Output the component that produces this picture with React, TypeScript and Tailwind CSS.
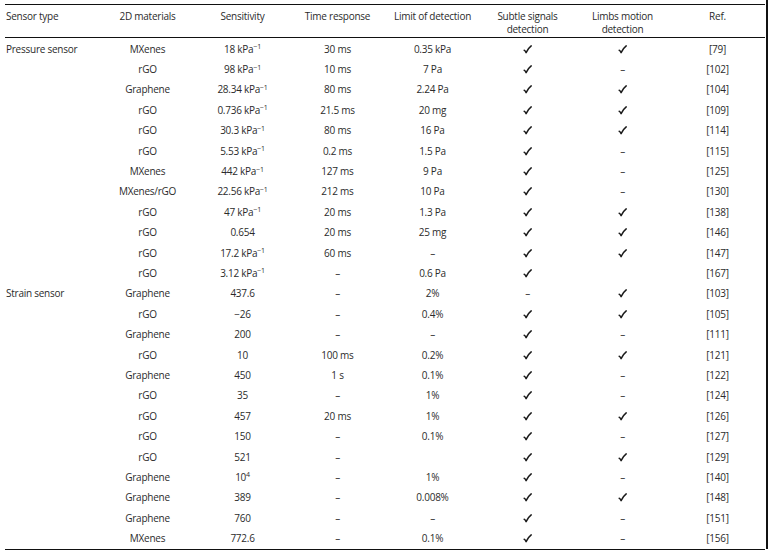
import React from "react";

type Row = {
  type?: string;
  mat: string;
  sens: React.ReactNode;
  time: string;
  limit: string;
  subtle: string;
  limbs: string;
  ref: string;
};

const kpa = (v: string) => (
  <>
    {v} kPa<sup className="text-[7px]">−1</sup>
  </>
);

const C = "✓";
const D = "–";

const rows: Row[] = [
  { type: "Pressure sensor", mat: "MXenes", sens: kpa("18"), time: "30 ms", limit: "0.35 kPa", subtle: C, limbs: C, ref: "[79]" },
  { mat: "rGO", sens: kpa("98"), time: "10 ms", limit: "7 Pa", subtle: C, limbs: D, ref: "[102]" },
  { mat: "Graphene", sens: kpa("28.34"), time: "80 ms", limit: "2.24 Pa", subtle: C, limbs: C, ref: "[104]" },
  { mat: "rGO", sens: kpa("0.736"), time: "21.5 ms", limit: "20 mg", subtle: C, limbs: C, ref: "[109]" },
  { mat: "rGO", sens: kpa("30.3"), time: "80 ms", limit: "16 Pa", subtle: C, limbs: C, ref: "[114]" },
  { mat: "rGO", sens: kpa("5.53"), time: "0.2 ms", limit: "1.5 Pa", subtle: C, limbs: D, ref: "[115]" },
  { mat: "MXenes", sens: kpa("442"), time: "127 ms", limit: "9 Pa", subtle: C, limbs: D, ref: "[125]" },
  { mat: "MXenes/rGO", sens: kpa("22.56"), time: "212 ms", limit: "10 Pa", subtle: C, limbs: D, ref: "[130]" },
  { mat: "rGO", sens: kpa("47"), time: "20 ms", limit: "1.3 Pa", subtle: C, limbs: C, ref: "[138]" },
  { mat: "rGO", sens: "0.654", time: "20 ms", limit: "25 mg", subtle: C, limbs: C, ref: "[146]" },
  { mat: "rGO", sens: kpa("17.2"), time: "60 ms", limit: D, subtle: C, limbs: C, ref: "[147]" },
  { mat: "rGO", sens: kpa("3.12"), time: D, limit: "0.6 Pa", subtle: C, limbs: "", ref: "[167]" },
  { type: "Strain sensor", mat: "Graphene", sens: "437.6", time: D, limit: "2%", subtle: D, limbs: C, ref: "[103]" },
  { mat: "rGO", sens: "−26", time: D, limit: "0.4%", subtle: C, limbs: C, ref: "[105]" },
  { mat: "Graphene", sens: "200", time: D, limit: D, subtle: C, limbs: D, ref: "[111]" },
  { mat: "rGO", sens: "10", time: "100 ms", limit: "0.2%", subtle: C, limbs: C, ref: "[121]" },
  { mat: "Graphene", sens: "450", time: "1 s", limit: "0.1%", subtle: C, limbs: D, ref: "[122]" },
  { mat: "rGO", sens: "35", time: D, limit: "1%", subtle: C, limbs: D, ref: "[124]" },
  { mat: "rGO", sens: "457", time: "20 ms", limit: "1%", subtle: C, limbs: C, ref: "[126]" },
  { mat: "rGO", sens: "150", time: D, limit: "0.1%", subtle: C, limbs: D, ref: "[127]" },
  { mat: "rGO", sens: "521", time: D, limit: "", subtle: C, limbs: C, ref: "[129]" },
  {
    mat: "Graphene",
    sens: (
      <>
        10<sup className="text-[7px]">4</sup>
      </>
    ),
    time: D,
    limit: "1%",
    subtle: C,
    limbs: D,
    ref: "[140]",
  },
  { mat: "Graphene", sens: "389", time: D, limit: "0.008%", subtle: C, limbs: C, ref: "[148]" },
  { mat: "Graphene", sens: "760", time: D, limit: D, subtle: C, limbs: D, ref: "[151]" },
  { mat: "MXenes", sens: "772.6", time: D, limit: "0.1%", subtle: C, limbs: D, ref: "[156]" },
];

const grid = "grid grid-cols-[95px_95px_95px_95px_95px_95px_95px_95px]";

// slanted hand-drawn style tick, as in the printed table
function Tick() {
  return (
    <svg width="9" height="9" viewBox="0 0 9 9" className="inline-block align-[-1px]">
      <path
        d="M1.2 5.2 C2 5.4 2.6 6.4 3.1 7.6 C4.4 4.8 6 2.6 8.2 0.9"
        fill="none"
        stroke="#1a1a1a"
        strokeWidth="1.5"
        strokeLinecap="round"
        strokeLinejoin="round"
      />
    </svg>
  );
}

function Mark({ v }: { v: string }) {
  if (v === C) return <Tick />;
  return <span>{v}</span>;
}

export default function App() {
  return (
    <div className="flex h-[553px] w-[768px] bg-white font-['Open_Sans',sans-serif] text-[10px] tracking-[-0.25px] text-[#2b2b2b]">
      <div className="ml-[5px] mt-[4px] w-[760px]">
        {/* header */}
        <div className={`${grid} h-[34px] items-start border-y border-[#111] pt-[5px] leading-[13px]`}>
          <div className="pl-[1px]">Sensor type</div>
          <div className="text-center">2D materials</div>
          <div className="text-center">Sensitivity</div>
          <div className="text-center">Time response</div>
          <div className="text-center">Limit of detection</div>
          <div className="text-center">
            Subtle signals
            <br />
            detection
          </div>
          <div className="text-center">
            Limbs motion
            <br />
            detection
          </div>
          <div className="text-center">Ref.</div>
        </div>

        {/* body */}
        <div className="border-b border-[#111] pt-[1px]">
          {rows.map((r, i) => (
            <div key={i} className={`${grid} h-[20.4px] items-center leading-[13px]`}>
              <div className="pl-[1px]">{r.type ?? ""}</div>
              <div className="text-center">{r.mat}</div>
              <div className="text-center">{r.sens}</div>
              <div className="text-center">{r.time}</div>
              <div className="text-center">{r.limit}</div>
              <div className="text-center">
                <Mark v={r.subtle} />
              </div>
              <div className="text-center">
                <Mark v={r.limbs} />
              </div>
              <div className="text-center">{r.ref}</div>
            </div>
          ))}
        </div>
      </div>
      <div className="ml-[1px] h-[549px] w-[2px] bg-[#111]" />
    </div>
  );
}
